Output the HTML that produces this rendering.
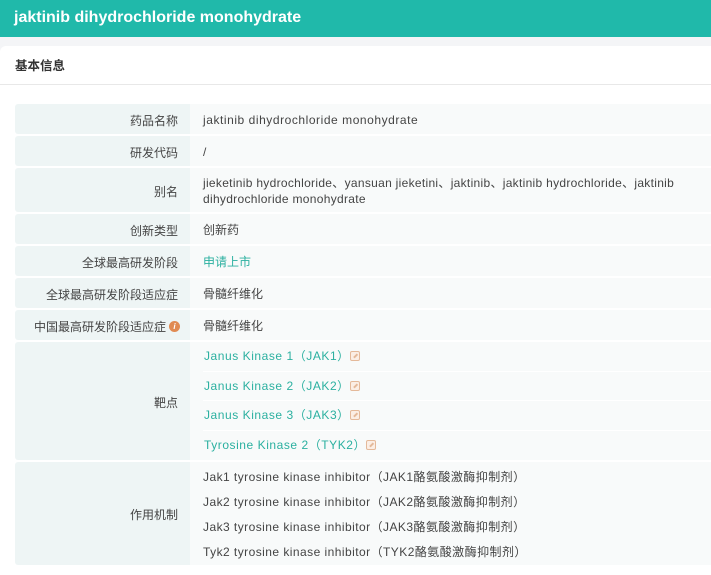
<!DOCTYPE html>
<html><head><meta charset="utf-8"><style>
*{margin:0;padding:0;box-sizing:border-box}
body{width:711px;height:575px;overflow:hidden;background:#f4f5f7;font-family:"Liberation Sans","Noto Sans CJK SC",sans-serif;color:#444;font-size:12px}
.hd{height:37px;background:#20b9aa;color:#fff;font-weight:bold;font-size:16px;line-height:36px;padding-left:14px}
.card{position:absolute;top:46px;left:0;width:711px;height:529px;background:#fff;border-top-left-radius:6px}
.ttl{height:39px;border-bottom:1px solid #e8e8e8;font-weight:bold;font-size:12.5px;line-height:40px;padding-left:15px;color:#333}
.tb{position:absolute;left:15px;top:58px;width:696px}
.r{display:flex;margin-bottom:2px}
.l{width:175px;background:#eef5f5;text-align:right;padding-right:12px;display:flex;align-items:center;justify-content:flex-end;border-radius:3px 0 0 3px;padding-top:2px}
.v{flex:1;background:#f8fafa;padding-left:13px;display:flex;flex-direction:column;justify-content:center;line-height:16px;padding-top:2px}
.e{letter-spacing:0.55px}
.sub{height:30px;display:flex;align-items:center;border-bottom:1px solid #fff;color:#2bb0a0;padding-left:1px;letter-spacing:0.55px}
.ic{display:inline-block;width:10px;height:10px;border:1px solid #e4b99a;border-radius:2px;margin-left:0px;position:relative;background:#fbeee5}
.ic:after{content:"";position:absolute;left:2px;top:3px;width:5px;height:1.5px;background:#e4b99a;transform:rotate(-45deg)}
.m{height:25px;line-height:25px;letter-spacing:0.45px}
.info{display:inline-block;width:11px;height:11px;border-radius:50%;background:#e08a52;color:#fff;font-size:8px;line-height:11px;text-align:center;margin-left:3px;font-style:italic;font-weight:bold}
</style></head><body>
<div class="hd">jaktinib dihydrochloride monohydrate</div>
<div class="card">
<div class="ttl">基本信息</div>
<div class="tb">
<div class="r" style="height:30px"><div class="l">药品名称</div><div class="v e">jaktinib dihydrochloride monohydrate</div></div>
<div class="r" style="height:30px"><div class="l">研发代码</div><div class="v">/</div></div>
<div class="r" style="height:44px"><div class="l">别名</div><div class="v e" style="letter-spacing:0.3px">jieketinib hydrochloride、yansuan jieketini、jaktinib、jaktinib hydrochloride、jaktinib<br>dihydrochloride monohydrate</div></div>
<div class="r" style="height:30px"><div class="l">创新类型</div><div class="v">创新药</div></div>
<div class="r" style="height:30px"><div class="l">全球最高研发阶段</div><div class="v" style="color:#2bb0a0">申请上市</div></div>
<div class="r" style="height:30px"><div class="l">全球最高研发阶段适应症</div><div class="v">骨髓纤维化</div></div>
<div class="r" style="height:30px"><div class="l" style="padding-right:10px">中国最高研发阶段适应症<span class="info">i</span></div><div class="v">骨髓纤维化</div></div>
<div class="r" style="height:118px"><div class="l">靶点</div><div class="v" style="justify-content:flex-start;padding-top:0">
<div class="sub">Janus Kinase 1（JAK1）<span class="ic"></span></div>
<div class="sub">Janus Kinase 2（JAK2）<span class="ic"></span></div>
<div class="sub">Janus Kinase 3（JAK3）<span class="ic"></span></div>
<div class="sub" style="border:0">Tyrosine Kinase 2（TYK2）<span class="ic"></span></div>
</div></div>
<div class="r" style="height:103px"><div class="l">作用机制</div><div class="v">
<div class="m">Jak1 tyrosine kinase inhibitor（JAK1酪氨酸激酶抑制剂）</div>
<div class="m">Jak2 tyrosine kinase inhibitor（JAK2酪氨酸激酶抑制剂）</div>
<div class="m">Jak3 tyrosine kinase inhibitor（JAK3酪氨酸激酶抑制剂）</div>
<div class="m">Tyk2 tyrosine kinase inhibitor（TYK2酪氨酸激酶抑制剂）</div>
</div></div>
</div></div>
</body></html>
